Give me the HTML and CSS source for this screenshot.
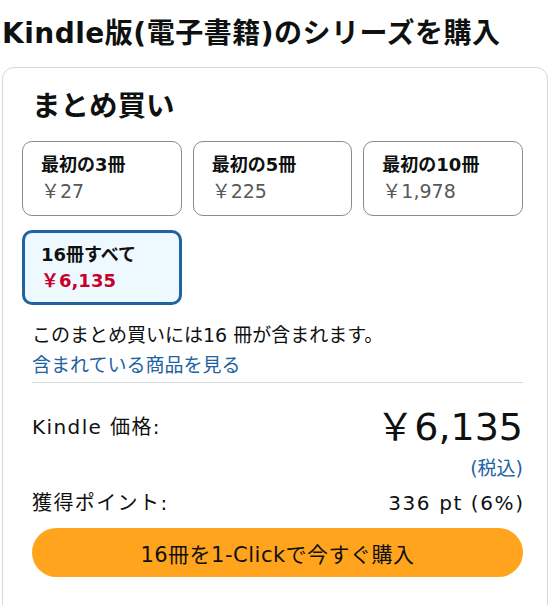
FILE: index.html
```html
<!DOCTYPE html>
<html lang="ja">
<head>
<meta charset="utf-8">
<title>Kindle版(電子書籍)のシリーズを購入</title>
<link rel="stylesheet" href="styles.css">
</head>
<body>
<h1 class="page-title">Kindle版(電子書籍)のシリーズを購入</h1>
<div class="card">
  <h2 class="card-title">まとめ買い</h2>
  <div class="options">
    <div class="option">
      <div class="option-label">最初の3冊</div>
      <div class="option-price">￥27</div>
    </div>
    <div class="option">
      <div class="option-label">最初の5冊</div>
      <div class="option-price">￥225</div>
    </div>
    <div class="option">
      <div class="option-label">最初の10冊</div>
      <div class="option-price">￥1,978</div>
    </div>
    <div class="option selected">
      <div class="option-label">16冊すべて</div>
      <div class="option-price">￥6,135</div>
    </div>
  </div>
  <div class="summary">
    <p class="summary-text">このまとめ買いには16 冊が含まれます。</p>
    <a class="summary-link" href="#">含まれている商品を見る</a>
    <div class="divider"></div>
    <div class="price-row">
      <span class="row-label">Kindle 価格:</span>
      <span class="big-price">￥6,135</span>
    </div>
    <div class="tax"><a href="#" class="tax-link">(税込)</a></div>
    <div class="points-row">
      <span class="row-label">獲得ポイント:</span>
      <span class="points">336 pt (6%)</span>
    </div>
    <button class="buy-button" type="button">16冊を1-Clickで今すぐ購入</button>
  </div>
</div>
</body>
</html>
```
FILE: styles.css
```css
html, body {
  margin: 0;
  padding: 0;
  background: #ffffff;
}
body {
  font-family: "DejaVu Sans", "Noto Sans CJK JP", sans-serif;
  color: #0f1111;
  overflow: hidden;
}
.page-title {
  margin: 14px 0 13px 0;
  padding-left: 2px;
  font-size: 28px;
  line-height: 40px;
  font-weight: 700;
  letter-spacing: 0.5px;
  white-space: nowrap;
}
.card {
  margin-left: 2px;
  width: 546px;
  box-sizing: border-box;
  border: 1px solid #d5d9d9;
  border-radius: 12px;
  padding: 21px 24px 40px 19px;
}
.card-title {
  margin: 0 0 16px 10px;
  font-size: 28.5px;
  line-height: 36px;
  font-weight: 700;
}
.options {
  display: grid;
  grid-template-columns: repeat(3, 1fr);
  column-gap: 11px;
  row-gap: 14px;
}
.option {
  height: 75px;
  box-sizing: border-box;
  border: 1px solid #888c8c;
  border-radius: 10px;
  padding: 10px 10px 0 18px;
}
.option.selected {
  border: 3px solid #2162a1;
  background: #edf8ff;
  padding: 9px 10px 0 16px;
}
.option-label {
  font-size: 18px;
  line-height: 26px;
  font-weight: 700;
  white-space: nowrap;
}
.option-price {
  font-size: 19px;
  line-height: 26px;
  color: #565959;
}
.option.selected .option-price {
  color: #c7002a;
  font-weight: 700;
  font-size: 18px;
}
.summary {
  margin-left: 10px;
  display: flex;
  flex-direction: column;
}
.summary-text {
  margin: 15px 0 0 0;
  font-size: 19px;
  line-height: 30px;
}
.summary-link {
  font-size: 19px;
  line-height: 30px;
  color: #2162a1;
  text-decoration: none;
  align-self: flex-start;
}
.divider {
  height: 1px;
  background: #d5d9d9;
  margin: 2px 0 22px 0;
}
.price-row {
  display: flex;
  justify-content: space-between;
  align-items: center;
  height: 44px;
}
.row-label {
  font-size: 20px;
  line-height: 30px;
  letter-spacing: 1.4px;
}
.big-price {
  font-size: 38px;
  line-height: 44px;
}
.tax {
  margin-top: 4px;
  text-align: right;
  font-size: 19px;
  line-height: 30px;
}
.tax-link {
  color: #2162a1;
  text-decoration: none;
}
.points-row {
  margin-top: 5px;
  display: flex;
  justify-content: space-between;
  align-items: center;
  height: 30px;
}
.points {
  font-size: 20px;
  line-height: 30px;
  letter-spacing: 1.6px;
  margin-right: -1.6px;
}
.buy-button {
  margin-top: 10px;
  height: 49px;
  border: none;
  border-radius: 25px;
  background: #ffa41c;
  color: #0f1111;
  font-family: "DejaVu Sans", "Noto Sans CJK JP", sans-serif;
  font-size: 21px;
  letter-spacing: 0.5px;
  padding: 0;
  cursor: pointer;
}
```
